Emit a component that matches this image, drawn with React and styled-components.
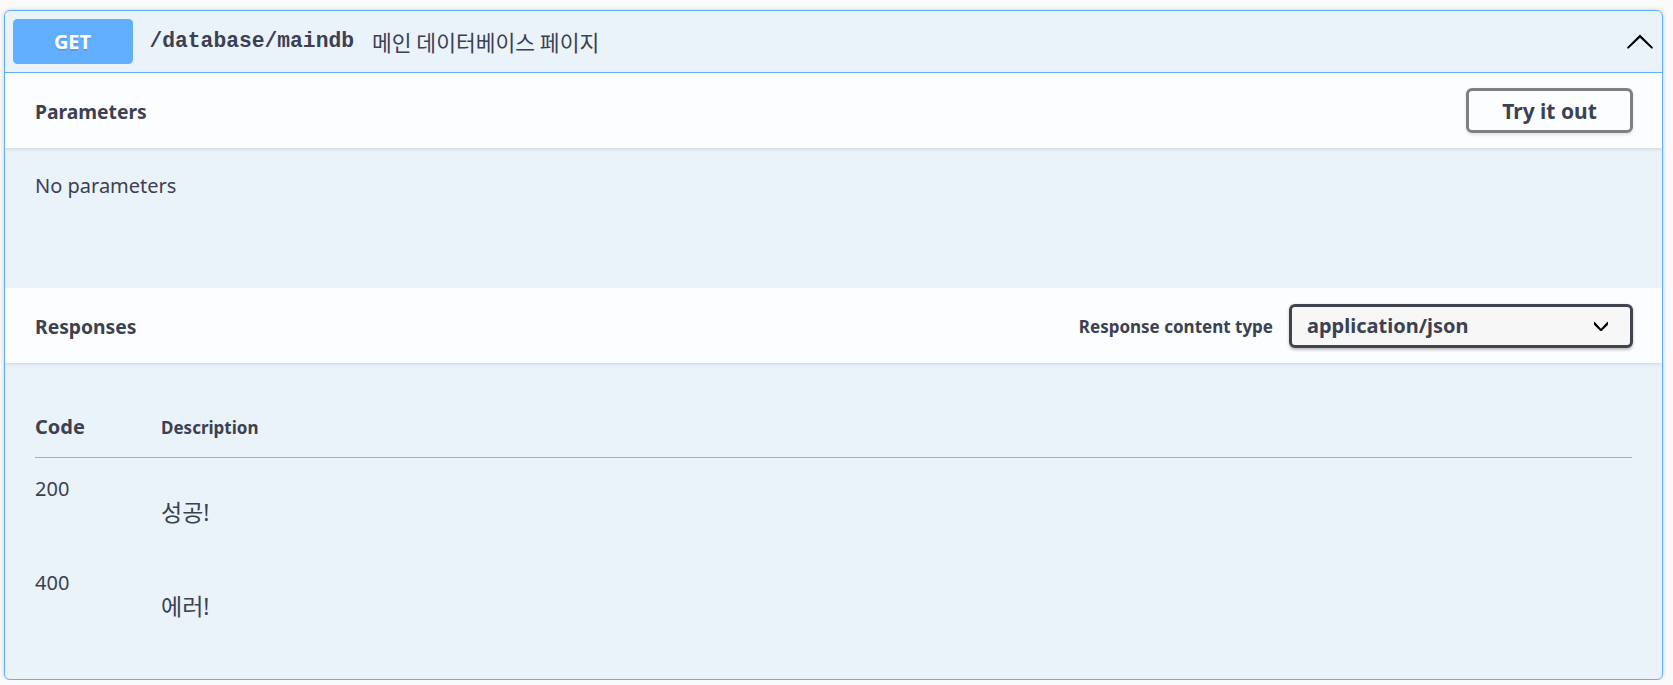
import styled, { createGlobalStyle } from "styled-components";

const GlobalStyle = createGlobalStyle`
    body {
        margin: 0;
        background: #fafafa;
        font-family: "Noto Sans", "Noto Sans CJK KR", sans-serif;
        color: #3b4151;
    }
`

const Page = styled.div`
    padding: 10px 10px 0 4px;
`

const Block = styled.div`
    border: 1px solid #61affe;
    border-radius: 6px;
    background: rgba(97, 175, 254, 0.1);
    box-shadow: 0 0 4.5px rgba(0, 0, 0, 0.19);
    overflow: hidden;
`

const Summary = styled.div`
    display: flex;
    align-items: center;
    padding: 7.5px 7.5px 8.5px 7.5px;
    border-bottom: 1px solid #61affe;
`

const Method = styled.span`
    width: 120px;
    height: 45px;
    flex-shrink: 0;
    display: flex;
    align-items: center;
    justify-content: center;
    border-radius: 4.5px;
    background: #61affe;
    color: #fff;
    font-size: 20px;
    font-weight: 700;
    text-shadow: 0 1.5px 0 rgba(0, 0, 0, 0.1);
`

const Path = styled.span`
    padding: 0 18px 0 17px;
    font-family: "Liberation Mono", monospace;
    font-size: 21.3px;
    font-weight: 700;
    color: #3b4151;
`

const SummaryDesc = styled.span`
    font-family: "Noto Sans CJK KR", sans-serif;
    font-size: 21.5px;
    color: #3b4151;
    flex: 1;
`

const Arrow = styled.svg`
    width: 30px;
    height: 30px;
    flex-shrink: 0;
`

const SectionHeader = styled.div`
    display: flex;
    align-items: center;
    justify-content: space-between;
    min-height: 75px;
    box-sizing: border-box;
    padding: 2px 29px 0 30px;
    background: rgba(255, 255, 255, 0.8);
    box-shadow: 0 1.5px 3px rgba(0, 0, 0, 0.1);
    position: relative;
    h4 {
        margin: 0;
        font-size: 19.3px;
        font-weight: 700;
    }
`

const TryButton = styled.button`
    width: 167px;
    height: 45px;
    margin-top: -2px;
    border: 3px solid #808080;
    border-radius: 6px;
    background: transparent;
    box-shadow: 0 1.5px 3px rgba(0, 0, 0, 0.1);
    font-family: inherit;
    font-size: 21px;
    font-weight: 700;
    color: #3b4151;
    cursor: pointer;
`

const ParamsBody = styled.div`
    height: 140px;
    box-sizing: border-box;
    padding: 24px 30px;
    p {
        margin: 0;
        font-size: 20px;
    }
`

const Controls = styled.div`
    display: flex;
    align-items: center;
    gap: 16px;
    margin-top: -2px;
    label {
        font-size: 17px;
        font-weight: 700;
        margin-top: 2px;
    }
`

const Select = styled.div`
    width: 344px;
    height: 44px;
    box-sizing: border-box;
    display: flex;
    align-items: center;
    justify-content: space-between;
    padding: 0 22px 0 15px;
    border: 3px solid #41444e;
    border-radius: 6px;
    background: #f7f7f7;
    box-shadow: 0 1.5px 3px rgba(0, 0, 0, 0.25);
    font-size: 20px;
    font-weight: 700;
    svg {
        width: 14px;
        height: 14px;
    }
`

const ResponsesBody = styled.div`
    padding: 30px 30px 33px 30px;
`

const Row = styled.div`
    display: grid;
    grid-template-columns: 126px 1fr;
    align-items: ${(p) => (p.$head ? "baseline" : "start")};
    padding: ${(p) => (p.$head ? "20px 0 17px" : "17px 0 0")};
    height: ${(p) => (p.$head ? "auto" : "94px")};
    box-sizing: border-box;
    border-bottom: ${(p) => (p.$head ? "1px solid #a8afbc" : "none")};
`

const HeadCell = styled.div`
    font-size: ${(p) => p.$size}px;
    font-weight: 700;
`

const Status = styled.div`
    font-size: 20px;
`

const Markdown = styled.div`
    p {
        margin: 20px 0 0;
        font-size: 23px;
        line-height: 1.5;
    }
`

const responses = [
    { code: "200", desc: "성공!" },
    { code: "400", desc: "에러!" },
]

const App = () => {
    return (
        <Page>
            <GlobalStyle />
            <Block>
                <Summary>
                    <Method>GET</Method>
                    <Path>/database/maindb</Path>
                    <SummaryDesc>메인 데이터베이스 페이지</SummaryDesc>
                    <Arrow viewBox="0 0 20 20">
                        <path d="M 17.418 14.908 C 17.69 15.176 18.127 15.176 18.397 14.908 C 18.667 14.64 18.668 14.207 18.397 13.939 L 10.489 6.109 C 10.219 5.841 9.782 5.841 9.51 6.109 L 1.602 13.939 C 1.332 14.207 1.332 14.64 1.602 14.908 C 1.873 15.176 2.311 15.176 2.581 14.908 L 10 7.767 L 17.418 14.908 Z" fill="#000" />
                    </Arrow>
                </Summary>

                <SectionHeader>
                    <h4>Parameters</h4>
                    <TryButton type="button">Try it out</TryButton>
                </SectionHeader>
                <ParamsBody>
                    <p>No parameters</p>
                </ParamsBody>

                <SectionHeader>
                    <h4>Responses</h4>
                    <Controls>
                        <label>Response content type</label>
                        <Select>
                            <span>application/json</span>
                            <svg viewBox="6 7 8 6">
                                <path d="M13.418 7.859a.695.695 0 01.978 0 .68.68 0 010 .969l-3.908 3.83a.697.697 0 01-.979 0l-3.908-3.83a.68.68 0 010-.969.695.695 0 01.978 0L10 11.5z" fill="#000" />
                            </svg>
                        </Select>
                    </Controls>
                </SectionHeader>
                <ResponsesBody>
                    <Row $head>
                        <HeadCell $size={20}>Code</HeadCell>
                        <HeadCell $size={17}>Description</HeadCell>
                    </Row>
                    {responses.map((r) => (
                        <Row key={r.code}>
                            <Status>{r.code}</Status>
                            <Markdown><p>{r.desc}</p></Markdown>
                        </Row>
                    ))}
                </ResponsesBody>
            </Block>
        </Page>
    )
}

export default App
